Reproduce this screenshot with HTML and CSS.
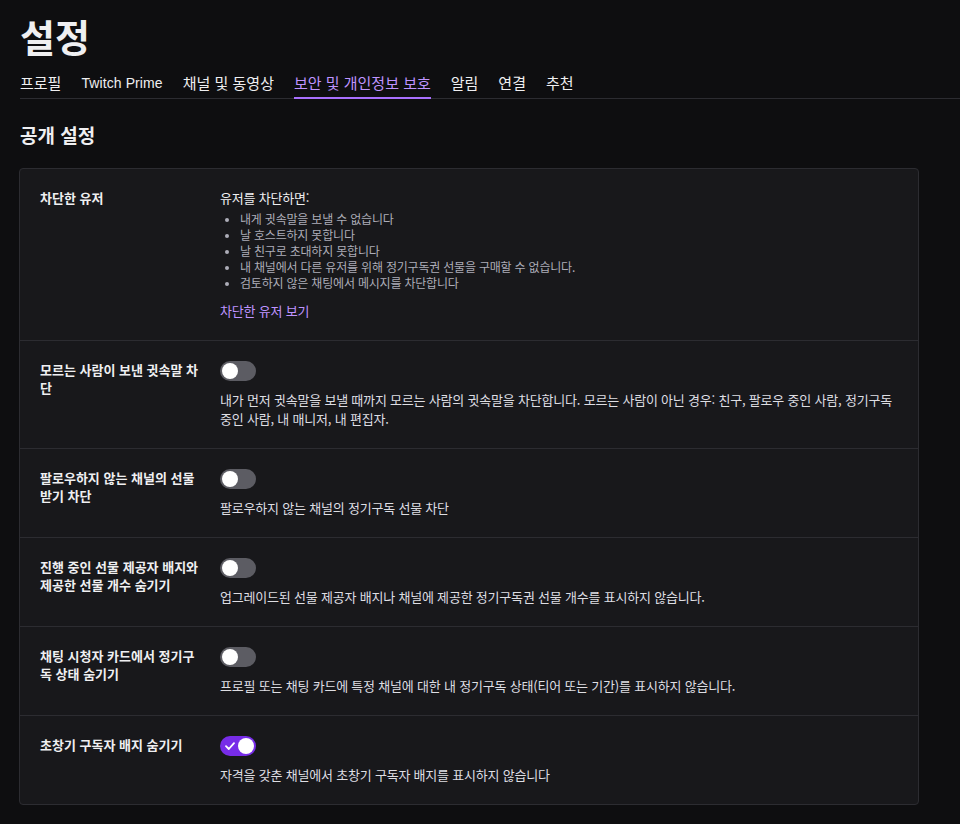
FILE: index.html
```html
<!DOCTYPE html>
<html lang="ko">
<head>
<meta charset="utf-8">
<link rel="stylesheet" href="styles.css">
</head>
<body>
<div class="page">
  <h1 class="title">설정</h1>
  <nav class="tabs">
    <a class="tab">프로필</a>
    <a class="tab latin">Twitch Prime</a>
    <a class="tab">채널 및 동영상</a>
    <a class="tab active">보안 및 개인정보 보호</a>
    <a class="tab">알림</a>
    <a class="tab">연결</a>
    <a class="tab">추천</a>
  </nav>
  <h2 class="section-title">공개 설정</h2>
  <div class="card">
    <div class="row">
      <div class="label">차단한 유저</div>
      <div class="content">
        <div class="heading">유저를 차단하면:</div>
        <ul class="list">
          <li>내게 귓속말을 보낼 수 없습니다</li>
          <li>날 호스트하지 못합니다</li>
          <li>날 친구로 초대하지 못합니다</li>
          <li>내 채널에서 다른 유저를 위해 정기구독권 선물을 구매할 수 없습니다.</li>
          <li>검토하지 않은 채팅에서 메시지를 차단합니다</li>
        </ul>
        <a class="link">차단한 유저 보기</a>
      </div>
    </div>
    <div class="row">
      <div class="label">모르는 사람이 보낸 귓속말 차단</div>
      <div class="content">
        <span class="toggle"><span class="knob"></span></span>
        <p class="desc">내가 먼저 귓속말을 보낼 때까지 모르는 사람의 귓속말을 차단합니다. 모르는 사람이 아닌 경우: 친구, 팔로우 중인 사람, 정기구독 중인 사람, 내 매니저, 내 편집자.</p>
      </div>
    </div>
    <div class="row">
      <div class="label">팔로우하지 않는 채널의 선물 받기 차단</div>
      <div class="content">
        <span class="toggle"><span class="knob"></span></span>
        <p class="desc">팔로우하지 않는 채널의 정기구독 선물 차단</p>
      </div>
    </div>
    <div class="row">
      <div class="label">진행 중인 선물 제공자 배지와 제공한 선물 개수 숨기기</div>
      <div class="content">
        <span class="toggle"><span class="knob"></span></span>
        <p class="desc">업그레이드된 선물 제공자 배지나 채널에 제공한 정기구독권 선물 개수를 표시하지 않습니다.</p>
      </div>
    </div>
    <div class="row">
      <div class="label">채팅 시청자 카드에서 정기구독 상태 숨기기</div>
      <div class="content">
        <span class="toggle"><span class="knob"></span></span>
        <p class="desc">프로필 또는 채팅 카드에 특정 채널에 대한 내 정기구독 상태(티어 또는 기간)를 표시하지 않습니다.</p>
      </div>
    </div>
    <div class="row">
      <div class="label">초창기 구독자 배지 숨기기</div>
      <div class="content">
        <span class="toggle on">
          <svg class="check" width="10" height="8" viewBox="0 0 10 8"><path d="M1 4.2 L3.8 7 L9 1.2" fill="none" stroke="#fff" stroke-width="1.8" stroke-linecap="round" stroke-linejoin="round"/></svg>
          <span class="knob"></span>
        </span>
        <p class="desc">자격을 갖춘 채널에서 초창기 구독자 배지를 표시하지 않습니다</p>
      </div>
    </div>
  </div>
</div>
</body>
</html>
```

FILE: styles.css
```css
html, body {
  margin: 0;
  padding: 0;
  background: #0e0e10;
}
body {
  font-family: "Noto Sans CJK KR", "Noto Sans", sans-serif;
  color: #efeff1;
}
.page {
  padding: 0 0 20px 20px;
}
.title {
  margin: 14px 0 0 0;
  font-size: 38px;
  line-height: 44px;
  font-weight: 700;
  color: #efeff1;
}
.tabs {
  display: flex;
  gap: 20px;
  margin-top: 15px;
  border-bottom: 1px solid #2c2c31;
}
.tab {
  font-size: 15px;
  line-height: 20px;
  padding-bottom: 4px;
  border-bottom: 2px solid transparent;
  margin-bottom: -1px;
  color: #efeff1;
}
.tab.latin {
  font-family: "Liberation Sans", sans-serif;
  font-size: 14px;
  letter-spacing: 0.1px;
}
.tab.active {
  color: #bf94ff;
  border-bottom-color: #a970ff;
}
.section-title {
  margin: 24px 0 21px 0;
  font-size: 19px;
  line-height: 24px;
  font-weight: 700;
}
.card {
  width: 898px;
  margin-left: -1px;
  background: #18181b;
  border: 1px solid #2c2c31;
  border-radius: 4px;
}
.row {
  display: flex;
  padding: 20px;
  border-top: 1px solid #2c2c31;
}
.row:first-child {
  border-top: none;
}
.label {
  width: 160px;
  flex: none;
  padding-right: 20px;
  font-size: 13px;
  line-height: 18px;
  font-weight: 700;
  color: #efeff1;
}
.content {
  flex: 1;
  min-width: 0;
  font-size: 13px;
  letter-spacing: -0.2px;
}
.heading {
  line-height: 18px;
  color: #efeff1;
}
.list {
  margin: 4px 0 0 0;
  padding-left: 20px;
  font-size: 12px;
  line-height: 16px;
  color: #adadb8;
}
.list li::marker {
  font-size: 10px;
}
.link {
  display: block;
  margin-top: 11px;
  line-height: 18px;
  color: #bf94ff;
}
.toggle {
  position: relative;
  display: block;
  width: 36px;
  height: 20px;
  border-radius: 10px;
  background: #5c5c63;
}
.toggle .knob {
  position: absolute;
  top: 2px;
  left: 2px;
  width: 16px;
  height: 16px;
  border-radius: 50%;
  background: #ffffff;
}
.toggle.on {
  background: #772ce8;
}
.toggle.on .knob {
  left: 18px;
}
.toggle .check {
  position: absolute;
  left: 5px;
  top: 6px;
}
.desc {
  margin: 9px 0 0 0;
  line-height: 19px;
  color: #dedee3;
}
```
